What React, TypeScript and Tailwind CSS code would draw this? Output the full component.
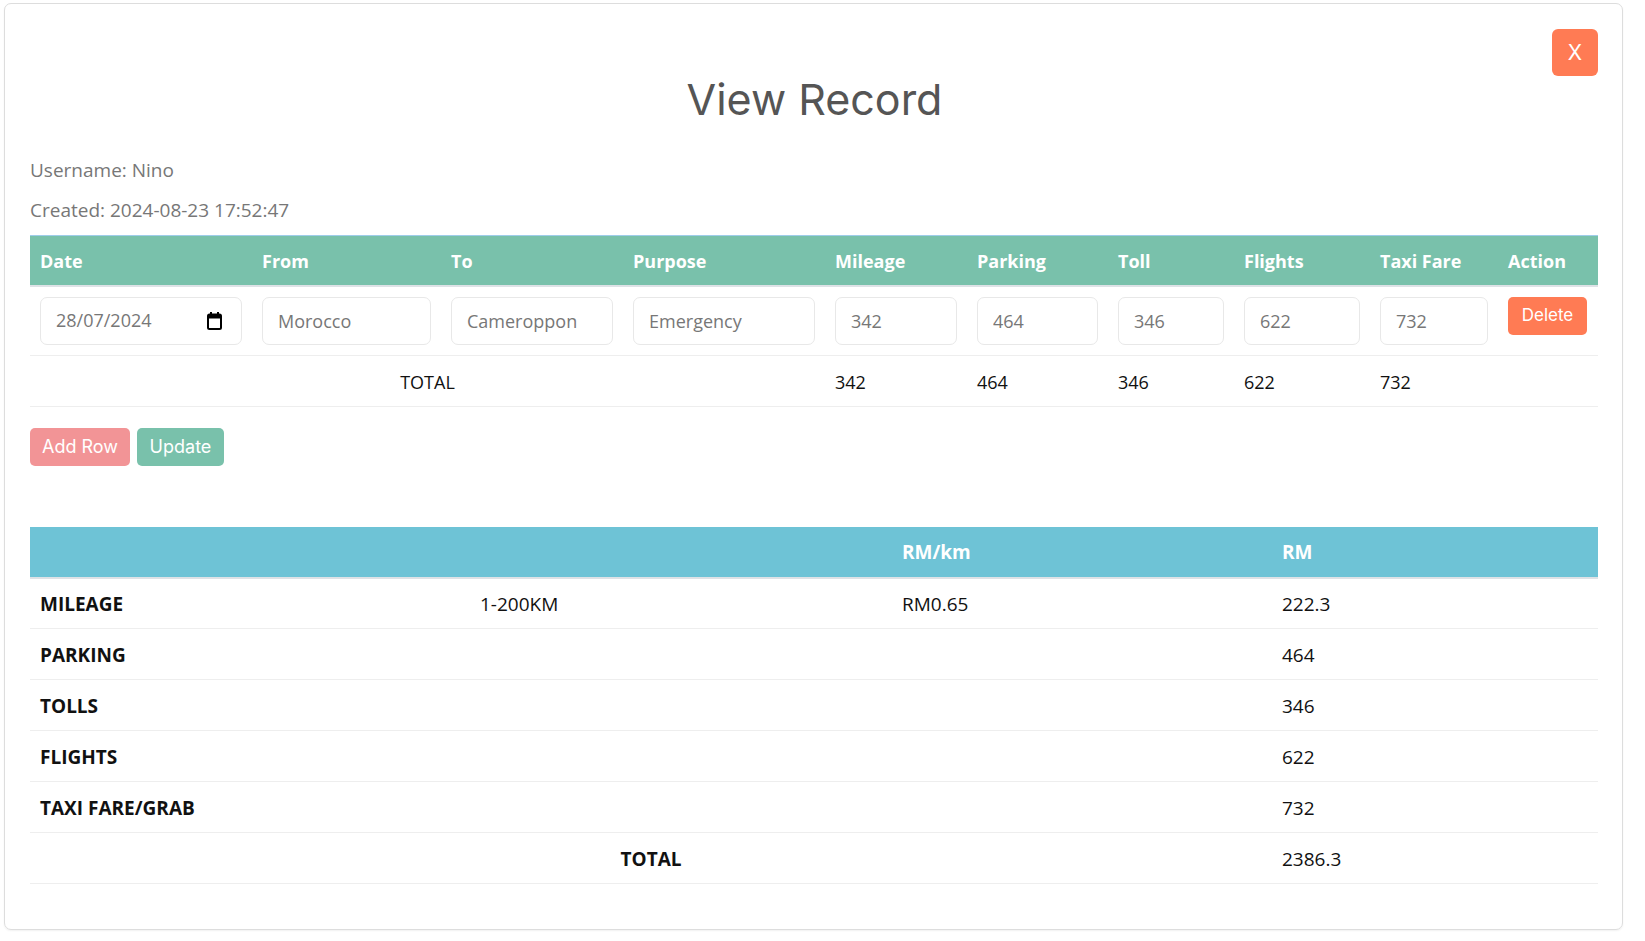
// View Record modal — expense claim lines with summary table
interface ClaimLine {
  date: string
  from: string
  to: string
  purpose: string
  mileage: string
  parking: string
  toll: string
  flights: string
  taxi: string
}

const lines: ClaimLine[] = [
  {
    date: '28/07/2024',
    from: 'Morocco',
    to: 'Cameroppon',
    purpose: 'Emergency',
    mileage: '342',
    parking: '464',
    toll: '346',
    flights: '622',
    taxi: '732',
  },
]

const headers = ['Date', 'From', 'To', 'Purpose', 'Mileage', 'Parking', 'Toll', 'Flights', 'Taxi Fare', 'Action']

const summary = [
  { label: 'MILEAGE', range: '1-200KM', rate: 'RM0.65', amount: '222.3' },
  { label: 'PARKING', range: '', rate: '', amount: '464' },
  { label: 'TOLLS', range: '', rate: '', amount: '346' },
  { label: 'FLIGHTS', range: '', rate: '', amount: '622' },
  { label: 'TAXI FARE/GRAB', range: '', rate: '', amount: '732' },
]

function CalendarIcon() {
  return (
    <svg width="15" height="18" viewBox="0 0 15 18" className="shrink-0">
      <rect x="3" y="0" width="2" height="3" fill="#000" />
      <rect x="10" y="0" width="2" height="3" fill="#000" />
      <rect x="1" y="2.5" width="13" height="14.5" rx="1.5" fill="none" stroke="#000" strokeWidth="2" />
      <rect x="1" y="2.5" width="13" height="4" fill="#000" />
    </svg>
  )
}

function Field({ value }: { value: string }) {
  return (
    <input
      readOnly
      value={value}
      className="w-full h-[48px] rounded-[7px] border border-[#e8e8e8] bg-white px-[15px] text-[18px] text-[#777] outline-none font-['Open_Sans',sans-serif]"
    />
  )
}

export default function App() {
  const line = lines[0]
  return (
    <div className="min-h-screen bg-white pt-[3px] pl-[4px] pr-[22px] font-['Open_Sans',sans-serif]">
      <div className="rounded-[7px] border border-[#dddddd] shadow-[0_1px_2px_rgba(0,0,0,0.06)] pl-[25px] pr-[24px] pt-[25px] pb-[45px]">
        <div className="flex justify-end">
          <button className="w-[46px] h-[47px] rounded-[6px] bg-[#ff7b54] text-white text-[21px] font-['Inter',sans-serif] flex items-center justify-center">
            X
          </button>
        </div>
        <h1 className="text-center text-[43px] leading-[52px] text-[#555] font-['Inter',sans-serif] mt-[-3px] pl-[1px]">
          View Record
        </h1>

        <div className="mt-[33px] text-[19px] leading-[24px] text-[#777]">
          <p className="mb-[16px]">Username: Nino</p>
          <p className="mb-[13px]">Created: 2024-08-23 17:52:47</p>
        </div>

        <table className="w-[1568px] table-fixed border-collapse">
          <colgroup>
            <col className="w-[222px]" />
            <col className="w-[189px]" />
            <col className="w-[182px]" />
            <col className="w-[202px]" />
            <col className="w-[142px]" />
            <col className="w-[141px]" />
            <col className="w-[126px]" />
            <col className="w-[136px]" />
            <col className="w-[128px]" />
            <col className="w-[100px]" />
          </colgroup>
          <thead>
            <tr className="bg-[#79c1ab] border-t border-[#9fcdea] border-b-2 border-b-[#dee2e6]">
              {headers.map((h) => (
                <th key={h} className="h-[50px] px-[10px] pt-[2px] text-left text-[18px] font-bold text-white">
                  {h}
                </th>
              ))}
            </tr>
          </thead>
          <tbody>
            <tr className="border-b border-[#eeeeee]">
              <td className="px-[10px] py-[10px]">
                <div className="w-full h-[48px] rounded-[7px] border border-[#e8e8e8] pl-[15px] pr-[19px] flex items-center justify-between text-[18px] text-[#777]">
                  <span>{line.date}</span>
                  <CalendarIcon />
                </div>
              </td>
              <td className="px-[10px] py-[10px]"><Field value={line.from} /></td>
              <td className="px-[10px] py-[10px]"><Field value={line.to} /></td>
              <td className="px-[10px] py-[10px]"><Field value={line.purpose} /></td>
              <td className="px-[10px] py-[10px]"><Field value={line.mileage} /></td>
              <td className="px-[10px] py-[10px]"><Field value={line.parking} /></td>
              <td className="px-[10px] py-[10px]"><Field value={line.toll} /></td>
              <td className="px-[10px] py-[10px]"><Field value={line.flights} /></td>
              <td className="px-[10px] py-[10px]"><Field value={line.taxi} /></td>
              <td className="px-[10px] py-[10px] align-top">
                <button className="w-[79px] h-[38px] rounded-[5px] bg-[#ff7b54] text-white text-[17px] font-['Inter',sans-serif]">
                  Delete
                </button>
              </td>
            </tr>
            <tr className="border-b border-[#eeeeee] text-[18px] text-[#111]">
              <td colSpan={4} className="h-[51px] pt-[3px] text-center">TOTAL</td>
              <td className="px-[10px] pt-[3px]">342</td>
              <td className="px-[10px] pt-[3px]">464</td>
              <td className="px-[10px] pt-[3px]">346</td>
              <td className="px-[10px] pt-[3px]">622</td>
              <td className="px-[10px] pt-[3px]">732</td>
              <td />
            </tr>
          </tbody>
        </table>

        <div className="flex gap-[7px] mt-[21px] font-['Inter',sans-serif] text-[18px] text-white">
          <button className="w-[100px] h-[38px] rounded-[5px] bg-[#f29496]">Add Row</button>
          <button className="w-[87px] h-[38px] rounded-[5px] bg-[#79c1ab]">Update</button>
        </div>

        <table className="w-[1568px] table-fixed border-collapse mt-[61px] text-[19px] text-[#111]">
          <colgroup>
            <col className="w-[440px]" />
            <col className="w-[422px]" />
            <col className="w-[380px]" />
            <col className="w-[326px]" />
          </colgroup>
          <thead>
            <tr className="bg-[#6ec3d6] border-b-2 border-[#dee2e6]">
              <th className="h-[51px]" />
              <th />
              <th className="px-[10px] pt-[2px] text-left font-bold text-white">RM/km</th>
              <th className="px-[10px] pt-[2px] text-left font-bold text-white">RM</th>
            </tr>
          </thead>
          <tbody>
            {summary.map((s) => (
              <tr key={s.label} className="border-b border-[#eeeeee]">
                <td className="h-[51px] px-[10px] pt-[2px] font-bold">{s.label}</td>
                <td className="px-[10px] pt-[2px]">{s.range}</td>
                <td className="px-[10px] pt-[2px]">{s.rate}</td>
                <td className="px-[10px] pt-[2px]">{s.amount}</td>
              </tr>
            ))}
            <tr className="border-b border-[#eeeeee]">
              <td colSpan={3} className="h-[51px] pt-[2px] text-center font-bold">TOTAL</td>
              <td className="px-[10px] pt-[2px]">2386.3</td>
            </tr>
          </tbody>
        </table>
      </div>
    </div>
  )
}
